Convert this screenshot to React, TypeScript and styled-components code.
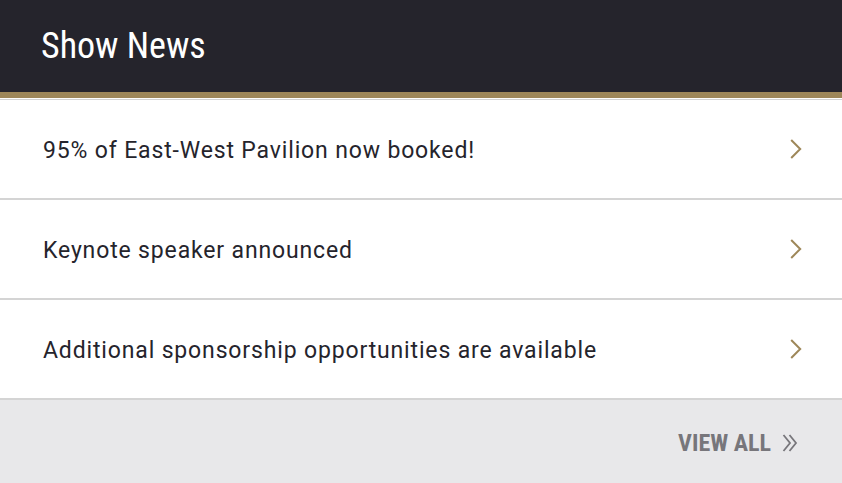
import React from 'react'
import styled, { createGlobalStyle } from 'styled-components'

const GlobalStyle = createGlobalStyle`
  html, body {
    margin: 0;
    padding: 0;
    background: #ffffff;
  }
  body {
    font-family: Roboto, "Noto Sans", sans-serif;
    -webkit-font-smoothing: antialiased;
  }
`

const Panel = styled.section`
  width: 842px;
  height: 483px;
  display: flex;
  flex-direction: column;
  background: #ffffff;
  overflow: hidden;
`

const Header = styled.header`
  height: 92px;
  flex: none;
  display: flex;
  align-items: center;
  padding: 0 41px;
  box-sizing: content-box;
  background: #25242c;
  border-bottom: 6px solid #9e8759;
`

const Title = styled.h2`
  margin: 0;
  font-family: "Roboto Condensed", "Liberation Sans Narrow", Roboto, sans-serif;
  font-weight: 400;
  font-size: 36px;
  color: #ffffff;
`

const Gap = styled.div`
  height: 1px;
  flex: none;
  background: #ffffff;
  border-bottom: 1px solid #d4d4d4;
`

const List = styled.ul`
  margin: 0;
  padding: 0;
  list-style: none;
`

const Item = styled.li`
  display: flex;
  align-items: center;
  justify-content: space-between;
  padding: 3px 40px 0 43px;
  box-sizing: content-box;
  height: 95px;
  border-bottom: 2px solid #d4d4d4;
  cursor: pointer;
`

const ItemText = styled.span`
  font-size: 23px;
  color: #25242c;
  letter-spacing: 0.85px;
`

const Arrow = styled.svg`
  margin-top: -3px;
`

const Footer = styled.footer`
  flex: 1;
  display: flex;
  align-items: center;
  justify-content: flex-end;
  padding: 2px 44px 0 0;
  background: #e8e8ea;
`

const ViewAll = styled.a`
  display: flex;
  align-items: center;
  gap: 11px;
  font-family: "Roboto Condensed", "Liberation Sans Narrow", Roboto, sans-serif;
  font-weight: 700;
  font-size: 24px;
  color: #77767b;
  text-decoration: none;
  cursor: pointer;
`

const Chevron = () => (
  <Arrow width="12" height="20" viewBox="0 0 12 20" fill="none">
    <path d="M1.2 1 L10.2 10 L1.2 19" stroke="#9e8759" strokeWidth="2" />
  </Arrow>
)

const DoubleChevron = () => (
  <svg width="16" height="18" viewBox="0 0 16 18" fill="none" stroke="#77767b" strokeWidth="1.8">
    <path d="M1.5 1 L8 9 L1.5 17" />
    <path d="M7.5 1 L14 9 L7.5 17" />
  </svg>
)

const news = [
  '95% of East-West Pavilion now booked!',
  'Keynote speaker announced',
  'Additional sponsorship opportunities are available',
]

export default function App() {
  return (
    <>
      <GlobalStyle />
      <Panel>
        <Header>
          <Title>Show News</Title>
        </Header>
        <Gap />
        <List>
          {news.map((n) => (
            <Item key={n}>
              <ItemText>{n}</ItemText>
              <Chevron />
            </Item>
          ))}
        </List>
        <Footer>
          <ViewAll>
            VIEW ALL
            <DoubleChevron />
          </ViewAll>
        </Footer>
      </Panel>
    </>
  )
}
